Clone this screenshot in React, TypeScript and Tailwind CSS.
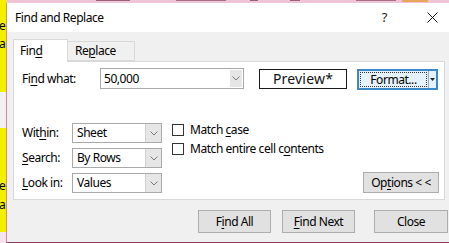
import React from "react";

const U = ({ children }: { children: React.ReactNode }) => (
  <span className="underline underline-offset-[2px] decoration-[1px]">{children}</span>
);

const Chevron = () => (
  <svg width="8" height="5" viewBox="0 0 8 5" className="block">
    <path d="M0.5 0.5 L4 4 L7.5 0.5" fill="none" stroke="#7a7a7a" strokeWidth="1" />
  </svg>
);

function Select({ value, w, btnW = 16 }: { value: string; w: string; btnW?: number }) {
  return (
    <div className={`${w} h-[20px] border border-[#a9a9a9] bg-white flex items-stretch`}>
      <div className="flex-1 pl-[4px] flex items-center text-[12px] leading-none text-black">{value}</div>
      <div
        className="bg-[#e6e6e6] border-l border-[#d0d0d0] flex items-center justify-center"
        style={{ width: btnW }}
      >
        <Chevron />
      </div>
    </div>
  );
}

function Btn({ children, w }: { children: React.ReactNode; w: string }) {
  return (
    <div
      className={`${w} h-[23px] bg-[#e1e1e1] border border-[#adadad] flex items-center justify-center text-[12px] text-black leading-none`}
    >
      {children}
    </div>
  );
}

function Check({ children }: { children: React.ReactNode }) {
  return (
    <div className="flex items-center h-[19px]">
      <div className="w-[12px] h-[12px] border border-[#333] bg-white" />
      <span className="ml-[6px] text-[12px] leading-none text-black">{children}</span>
    </div>
  );
}

export default function App() {
  return (
    <div
      className="w-[449px] h-[243px] overflow-hidden flex bg-[#f6e3eb] tracking-[-0.45px]"
      style={{ fontFamily: '"Noto Sans", "Open Sans", sans-serif' }}
    >
      {/* left strip of the sheet behind */}
      <div className="w-[6px] flex flex-col shrink-0 overflow-hidden">
        <div className="h-[92px] bg-[#f2ef00] flex flex-col text-[12px] leading-none text-black">
          <span className="mt-[20px] -ml-[1px]">e</span>
          <span className="mt-[6px] -ml-[1px]">a</span>
        </div>
        <div className="h-[36px] bg-[#f4eff1]" />
        <div className="h-[104px] bg-[#f2ef00] flex flex-col text-[12px] leading-none text-black">
          <span className="mt-[52px] -ml-[1px]">e</span>
          <span className="mt-[7px] -ml-[1px]">a</span>
        </div>
        <div className="flex-1 bg-[#f6e3eb]" />
      </div>

      <div className="flex-1 flex flex-col">
        {/* top strip of the sheet behind */}
        <div className="h-[3px] bg-[#f1c3d6] flex items-start">
          <div className="ml-[90px] w-[34px] h-[1px] bg-[#9a6478]" />
          <div className="ml-[46px] w-[50px] h-[1px] bg-[#a57084]" />
          <div className="ml-[24px] w-[8px] h-[1px] bg-[#9a6478]" />
          <div className="ml-[32px] w-[10px] h-[1px] bg-[#9a6478]" />
          <div className="ml-[56px] w-[40px] h-[1px] bg-[#a57084]" />
          <div className="ml-[6px] w-[26px] h-[2px] bg-[#e9a65a]" />
        </div>

        {/* dialog */}
        <div className="flex-1 flex flex-col border-l border-b border-l-[#c98aa6] border-b-[#8e3d60] bg-[#f0f0f0]">
          {/* title bar */}
          <div className="h-[29px] bg-white flex items-center pl-[8px] text-[12px] text-black leading-none">
            <span>Find and Replace</span>
            <span className="ml-auto mr-[40px] text-[13px] text-[#222]">?</span>
            <svg width="11" height="11" viewBox="0 0 11 11" className="mr-[11px]">
              <path d="M0.5 0.5 L10.5 10.5 M10.5 0.5 L0.5 10.5" stroke="#111" strokeWidth="1" />
            </svg>
          </div>

          {/* tabs */}
          <div className="flex items-end pl-[6px] pt-[7px] h-[30px] relative z-10">
            <div className="w-[55px] h-[23px] bg-white border border-b-0 border-[#d9d9d9] flex items-center pl-[6px] text-[12px] leading-none text-black">
              <span>
                Fin<U>d</U>
              </span>
            </div>
            <div className="w-[67px] h-[20px] mb-[1px] bg-[#f0f0f0] border border-l-0 border-[#d9d9d9] flex items-center pl-[7px] text-[12px] leading-none text-black">
              <span>
                Re<U>p</U>lace
              </span>
            </div>
          </div>

          {/* panel */}
          <div className="ml-[6px] mr-[4px] -mt-[1px] h-[139px] bg-white border border-[#d9d9d9] flex flex-col pt-[6px] pl-[8px] pr-[5px]">
            <div className="flex items-start">
              <div className="w-[78px] h-[21px] flex items-center text-[12px] leading-none text-black">
                <span>
                  Fi<U>n</U>d what:
                </span>
              </div>
              <div className="w-[144px] h-[21px] border border-[#a9a9a9] bg-white flex items-stretch">
                <div className="flex-1 pl-[3px] flex items-center text-[12px] leading-none text-black">50,000</div>
                <div className="w-[12px] my-[1px] mr-[1px] bg-[#e6e6e6] flex items-center justify-center">
                  <Chevron />
                </div>
              </div>
              <div className="ml-[15px] mt-[1px] w-[88px] h-[20px] border-[1.5px] border-[#1a1a1a] bg-white flex items-center justify-center text-[14px] leading-none text-[#111] tracking-[0.2px]">
                Preview*
              </div>
              <div className="ml-[10px] mt-[1px] w-[81px] h-[21px] border-2 border-[#3c87c8] bg-[#e5f1fb] flex items-stretch">
                <div className="flex-1 m-[1px] border border-dotted border-[#333] flex items-center justify-center text-[12px] leading-none text-black">
                  Format...
                </div>
                <div className="w-[8px] border-l border-[#9ab] flex items-center justify-center">
                  <svg width="5" height="3" viewBox="0 0 5 3">
                    <path d="M0 0 L5 0 L2.5 3 Z" fill="#222" />
                  </svg>
                </div>
              </div>
            </div>

            <div className="flex items-end mt-[33px]">
              <div className="flex flex-col gap-[5px]">
                <div className="flex items-center">
                  <div className="w-[50px] text-[12px] leading-none text-black">
                    Wit<U>h</U>in:
                  </div>
                  <Select value="Sheet" w="w-[90px]" />
                </div>
                <div className="flex items-center">
                  <div className="w-[50px] text-[12px] leading-none text-black">
                    <U>S</U>earch:
                  </div>
                  <Select value="By Rows" w="w-[90px]" />
                </div>
                <div className="flex items-center">
                  <div className="w-[50px] text-[12px] leading-none text-black">
                    <U>L</U>ook in:
                  </div>
                  <Select value="Values" w="w-[90px]" />
                </div>
              </div>

              <div className="self-start ml-[10px] -mt-[3px] flex flex-col">
                <Check>
                  Match <U>c</U>ase
                </Check>
                <Check>
                  Match entire cell c<U>o</U>ntents
                </Check>
              </div>

              <div className="ml-auto w-[76px] h-[21px] bg-[#e1e1e1] border border-[#adadad] flex items-center justify-center text-[12px] leading-none text-black">
                <span>
                  Op<U>t</U>ions &lt; &lt;
                </span>
              </div>
            </div>
          </div>

          {/* bottom buttons */}
          <div className="flex justify-end items-start mt-[10px] pr-[1px]">
            <Btn w="w-[73px]">
              <span>
                F<U>i</U>nd All
              </span>
            </Btn>
            <div className="ml-[11px]">
              <Btn w="w-[73px]">
                <span>
                  <U>F</U>ind Next
                </span>
              </Btn>
            </div>
            <div className="ml-[19px]">
              <Btn w="w-[74px]">Close</Btn>
            </div>
          </div>
        </div>
      </div>
    </div>
  );
}
